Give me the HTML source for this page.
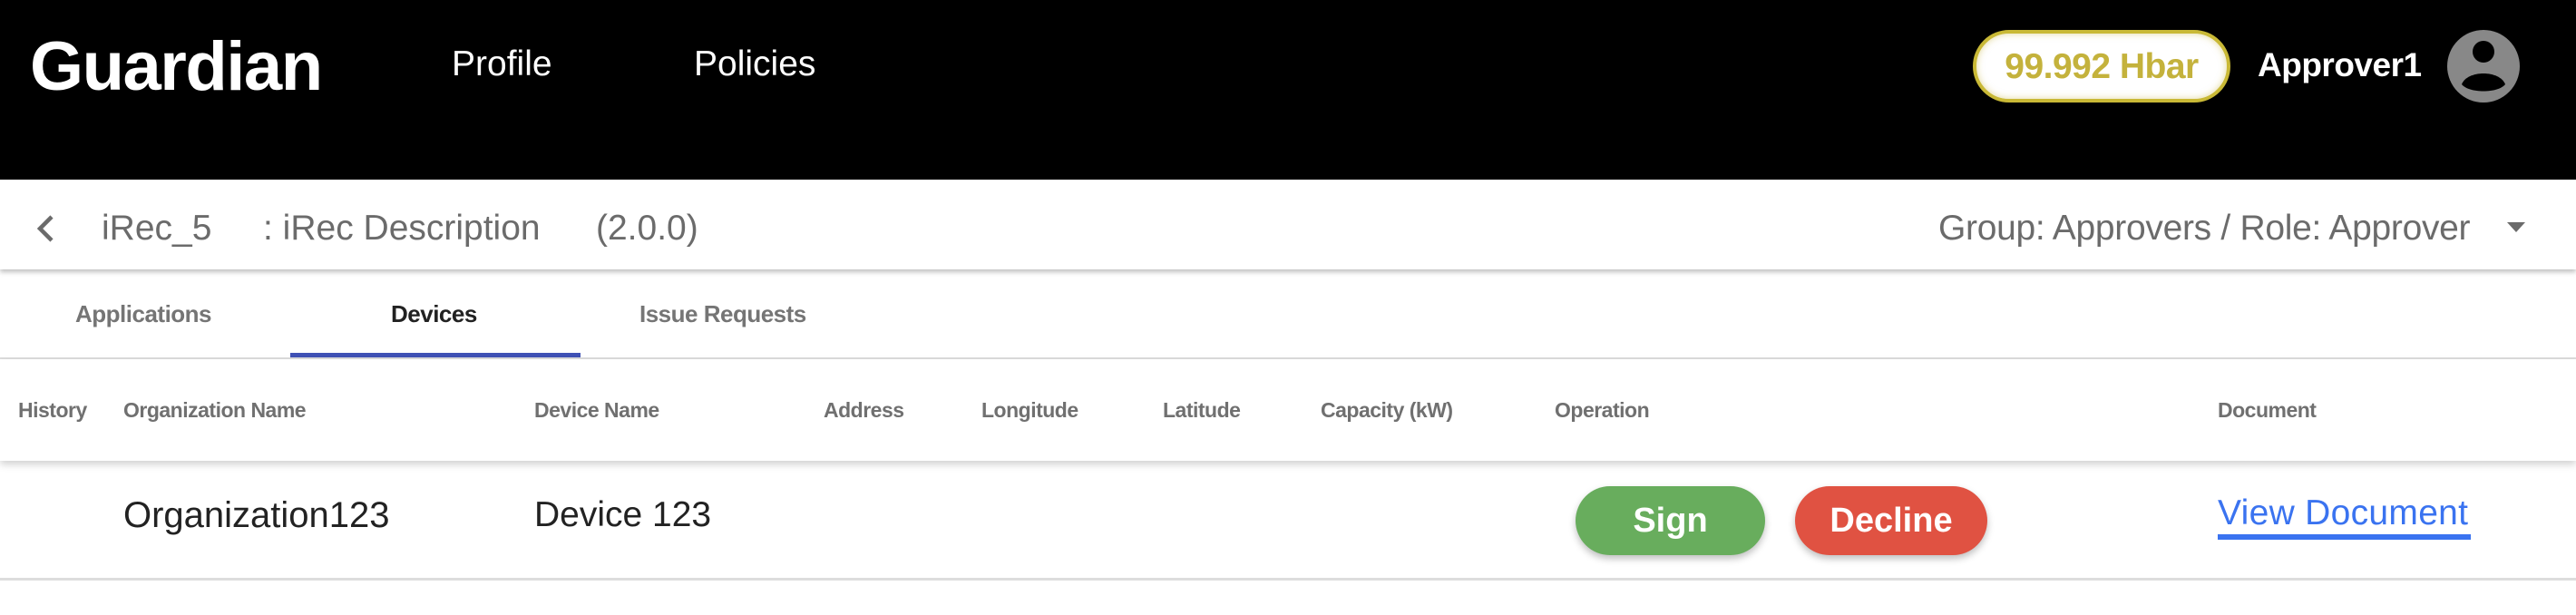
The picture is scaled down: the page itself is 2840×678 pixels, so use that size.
<!DOCTYPE html>
<html><head><meta charset="utf-8"><style>
*{margin:0;padding:0;box-sizing:border-box}
body{width:2840px;height:678px;overflow:hidden;background:#fff;font-family:"Liberation Sans",Arial,sans-serif;position:relative}
.a{position:absolute;white-space:nowrap;line-height:1}
.hdr{position:absolute;left:0;top:0;width:2840px;height:198px;background:#000}
.bar2{position:absolute;left:0;top:198px;width:2840px;height:99px;background:#fff;box-shadow:0 3px 5px rgba(0,0,0,.25);z-index:2}
.g{color:#6b6b6b}
.th{font-size:23px;color:#707070;font-weight:bold;top:441px;letter-spacing:-0.5px}
.btn{position:absolute;top:536px;height:76px;border-radius:38px;color:#fff;font-weight:bold;font-size:38px;display:flex;align-items:center;justify-content:center;box-shadow:0 4px 8px rgba(0,0,0,.25)}
</style></head><body>
<div class="hdr"></div>
<div class="a" style="left:33px;top:36px;font-size:76px;font-weight:bold;color:#fff;letter-spacing:-1.5px">Guardian</div>
<div class="a" style="left:498px;top:51px;font-size:39px;color:#fff">Profile</div>
<div class="a" style="left:765px;top:51px;font-size:39px;color:#fff">Policies</div>
<div class="a" style="left:2175px;top:33px;width:284px;height:80px;border:4px solid #c9b936;border-radius:40px;background:#fff;box-shadow:inset 0 0 8px rgba(200,180,60,.5);display:flex;align-items:center;justify-content:center;font-size:39px;font-weight:bold;color:#c4b23c;letter-spacing:-0.5px">99.992 Hbar</div>
<div class="a" style="left:2489px;top:53px;font-size:37px;font-weight:bold;color:#fff;letter-spacing:-0.5px">Approver1</div>
<svg class="a" style="left:2698px;top:33px" width="80" height="80" viewBox="0 0 80 80"><circle cx="40" cy="40" r="40" fill="#888"/><circle cx="40" cy="24" r="12" fill="#000"/><path d="M16 60 C22 44 58 44 64 60 C56 70 24 70 16 60Z" fill="#000"/></svg>
<div class="bar2"></div>
<svg class="a" style="left:38px;top:236px;z-index:3" width="24" height="32" viewBox="0 0 24 32"><path d="M19 3 L6 16 L19 29" fill="none" stroke="#6b6b6b" stroke-width="4.5"/></svg>
<div class="a g" style="left:112px;top:232px;font-size:39px;z-index:3">iRec_5</div>
<div class="a g" style="left:290px;top:232px;font-size:39px;z-index:3">: iRec Description</div>
<div class="a g" style="left:657px;top:232px;font-size:39px;z-index:3">(2.0.0)</div>
<div class="a g" style="left:2137px;top:232px;font-size:39px;z-index:3;letter-spacing:-0.3px">Group: Approvers / Role: Approver</div>
<svg class="a" style="left:2764px;top:245px;z-index:3" width="22" height="12" viewBox="0 0 22 12"><path d="M0 0H20L10 11Z" fill="#6b6b6b"/></svg>
<div class="a" style="left:83px;top:333px;font-size:26px;color:#757575;font-weight:bold;letter-spacing:-0.5px">Applications</div>
<div class="a" style="left:431px;top:333px;font-size:26px;color:#222;font-weight:bold;letter-spacing:-0.5px">Devices</div>
<div class="a" style="left:705px;top:333px;font-size:26px;color:#757575;font-weight:bold;letter-spacing:-0.5px">Issue Requests</div>
<div class="a" style="left:320px;top:389px;width:320px;height:5px;background:#3f51b5"></div>
<div class="a" style="left:0;top:394px;width:2840px;height:2px;background:#ddd"></div>
<div class="a" style="left:0;top:396px;width:2840px;height:112px;background:#fff;box-shadow:0 4px 8px rgba(0,0,0,.18);z-index:1"></div>
<div class="a th" style="left:20px;z-index:2">History</div>
<div class="a th" style="left:136px;z-index:2">Organization Name</div>
<div class="a th" style="left:589px;z-index:2">Device Name</div>
<div class="a th" style="left:908px;z-index:2">Address</div>
<div class="a th" style="left:1082px;z-index:2">Longitude</div>
<div class="a th" style="left:1282px;z-index:2">Latitude</div>
<div class="a th" style="left:1456px;z-index:2">Capacity (kW)</div>
<div class="a th" style="left:1714px;z-index:2">Operation</div>
<div class="a th" style="left:2445px;z-index:2">Document</div>
<div class="a" style="left:136px;top:548px;font-size:40px;color:#222">Organization123</div>
<div class="a" style="left:589px;top:548px;font-size:39px;color:#222">Device 123</div>
<div class="btn" style="left:1737px;width:209px;background:#68ad5d">Sign</div>
<div class="btn" style="left:1979px;width:212px;background:#e05242">Decline</div>
<div class="a" style="left:2445px;top:546px;font-size:39px;color:#3a73f0;letter-spacing:0.3px">View Document</div>
<div class="a" style="left:2445px;top:589px;width:279px;height:6px;background:#3a73f0"></div>
<div class="a" style="left:0;top:637px;width:2840px;height:3px;background:#ddd"></div>
</body></html>
